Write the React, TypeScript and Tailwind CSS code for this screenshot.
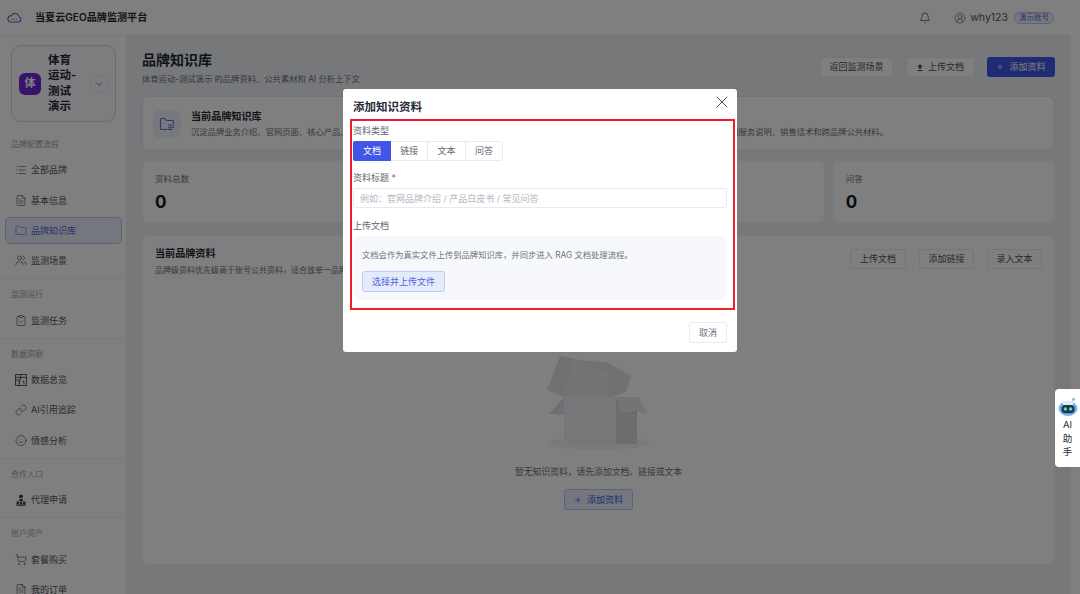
import { Bell, ChevronDown, CircleUserRound, ClipboardCheck, FileText, Folder, Link, List, Plus, ShoppingCart, Smile, Users, X } from 'lucide-react';
import type { ReactNode } from 'react';

const font = { fontFamily: 'Inter, "Noto Sans CJK SC", sans-serif' };

const CloudLogo = () => (
  <svg width="15" height="11" viewBox="0 0 15 11" fill="none" strokeWidth="1.1">
    <defs>
      <linearGradient id="cloudStroke" x1="0" y1="0" x2="1" y2="1">
        <stop offset="0" stopColor="#4a5568" />
        <stop offset="0.55" stopColor="#5a7fd0" />
        <stop offset="1" stopColor="#8a3fc8" />
      </linearGradient>
    </defs>
    <path d="M3.4 10H11.5a2.6 2.6 0 0 0 .5-5.1A4 4 0 0 0 4.4 3.7 3.2 3.2 0 0 0 3.4 10Z" stroke="url(#cloudStroke)" />
    <path d="M4.6 7.4h1.2M6.8 7.4h1.2M9 7.4h1.2" stroke="#7f93c8" strokeWidth="1.4" />
  </svg>
);

const OverviewIcon = () => (
  <svg width="12" height="12" viewBox="0 0 12 12" fill="none" stroke="currentColor" strokeWidth="0.9">
    <rect x="0.6" y="0.6" width="10.8" height="10.8" />
    <path d="M0.6 3.4h10.8M0.6 6h5M5.6 0.6V6M3 7.5h1.6v2.5H3M7.5 7.5h1.5v2.6" />
  </svg>
);

const AgentIcon = () => (
  <svg width="12" height="12" viewBox="0 0 12 12" fill="currentColor">
    <circle cx="6" cy="2.4" r="1.9" />
    <path d="M4.4 5h3.2l.5 2H3.9zM1.5 7.5h2.4v3H1.5zM4.8 7.5h2.4v3H4.8zM8.1 7.5h2.4v3H8.1zM1.5 10.8h9v.9h-9z" />
  </svg>
);

const FolderListIcon = () => (
  <svg width="16" height="16" viewBox="0 0 16 16" fill="none" stroke="#5a73e0" strokeWidth="1.1" strokeLinecap="round" strokeLinejoin="round">
    <path d="M8 13.5H2.5a1 1 0 0 1-1-1v-9a1 1 0 0 1 1-1h3.4l1.5 2h6.1a1 1 0 0 1 1 1v2" />
    <path d="M9.5 9h5M9.5 11.2h5M9.5 13.4h3.5" />
  </svg>
);

const SolidUpload = () => (
  <svg width="6" height="7" viewBox="0 0 6 7" fill="currentColor">
    <path d="M3 0 5.6 3H4v2H2V3H.4zM.4 5.9h5.2V7H.4z" />
  </svg>
);

const EmptyBox = () => (
  <svg width="104" height="96" viewBox="0 0 104 96">
    <ellipse cx="51" cy="89" rx="51" ry="7" fill="#f2f4f8" />
    <path d="M17 43 2 60l15 1z" fill="#dfe0e6" />
    <path d="M17 43h52v47H17z" fill="#eeeef2" />
    <path d="M69 43h21v47H69z" fill="#dadadf" />
    <path d="M69 43 74 60l16 0V57z" fill="#cfcfd6" />
    <path d="M69 43h23l8 17-10-3-16 3z" fill="#e8e8ec" />
    <path d="M0 36 13 2l26 5 21 1 24 14-5 16-14 5H17z" fill="#e3e3e8" />
    <path d="M17 43 26 6l36 14-2 23z" fill="#e9e9ed" />
  </svg>
);

const NavItem = ({ icon, label, active }: { icon: ReactNode; label: string; active?: boolean }) => (
  <div
    className={
      active
        ? 'ml-[5px] mr-[4px] flex h-[27px] items-center gap-[4px] rounded-[5px] border border-[#b8c4f0] bg-[#eaeefc] pl-[9px] text-[#5468d8]'
        : 'ml-[5px] mr-[4px] flex h-[27px] items-center gap-[4px] pl-[10px] text-[#374151]'
    }
  >
    <span className="flex w-3 justify-center">{icon}</span>
    <span className={active ? 'text-[9px] text-[#5468d8]' : 'text-[9px] text-[#4b5563]'}>{label}</span>
  </div>
);

const Section = ({ title, children, last }: { title: string; children: ReactNode; last?: boolean }) => (
  <div className={last ? 'pt-[9px]' : 'border-b border-[#f2f3f6] pb-[4px] pt-[9px]'}>
    <div className="mb-[6.5px] pl-[11px] text-[8px] leading-[12px] text-[#9ca3af]">{title}</div>
    <div className="flex flex-col gap-[3.3px]">{children}</div>
  </div>
);

const StatCard = ({ label }: { label: string }) => (
  <div className="h-[63px] rounded-[7px] border border-[#f1f3f7] bg-white pl-[12px] pt-[12px]">
    <div className="text-[8.5px] leading-[13px] text-[#6b7280]">{label}</div>
    <div className="mt-[5px] text-[17px] font-bold leading-[22px] text-[#111827]">0</div>
  </div>
);

const OutlineButton = ({ children, className }: { children: ReactNode; className: string }) => (
  <button className={`flex h-[20px] items-center justify-center gap-[5px] rounded-[3px] border border-[#e8eaef] bg-white text-[9px] text-[#4b5563] ${className}`}>
    {children}
  </button>
);

const TypeTab = ({ label, active }: { label: string; active?: boolean }) => (
  <div
    className={
      active
        ? 'flex h-full w-[38px] items-center justify-center rounded-l-[2px] bg-[#3f56e8] text-[9px] text-white'
        : 'flex h-full w-[37.4px] items-center justify-center border-y border-r border-[#e8eaef] text-[9px] text-[#5f6672] last:rounded-r-[2px]'
    }
  >
    {label}
  </div>
);

const RobotIcon = () => (
  <svg width="20" height="20" viewBox="0 0 20 20">
    <circle cx="15.5" cy="2.2" r="1.5" fill="#7cc4f5" />
    <path d="M13 6 15 3" stroke="#7cc4f5" strokeWidth="0.8" />
    <ellipse cx="10" cy="11.5" rx="9.4" ry="7.5" fill="#6fb6ee" />
    <ellipse cx="10" cy="6.2" rx="5.5" ry="2.8" fill="#dcefFb" />
    <rect x="3.4" y="8" width="13.2" height="8.2" rx="4" fill="#2b3340" />
    <circle cx="7.4" cy="12" r="1.7" fill="#43e0c9" />
    <circle cx="12.6" cy="12" r="1.7" fill="#43e0c9" />
  </svg>
);

export default function App() {
  return (
    <div className="relative flex h-[594px] w-[1080px] overflow-hidden bg-white" style={font}>
      <div className="w-[1071px] shrink-0 bg-[#eef0f5]">
        {/* Top bar */}
        <header className="flex h-[36px] items-center border-b border-[#eceef2] bg-white pl-[7px] pr-[17px]">
          <CloudLogo />
          <span className="ml-[13px] text-[10.1px] font-semibold text-[#1f2937]">当夏云GEO品牌监测平台</span>
          <Bell size={12} strokeWidth={1.4} className="ml-auto text-[#374151]" />
          <CircleUserRound size={12} strokeWidth={1.2} className="ml-[23px] text-[#4b5563]" />
          <span className="ml-[4px] text-[10.5px] text-[#4b5563]">why123</span>
          <span className="ml-[6px] flex h-[12px] w-[40px] items-center justify-center rounded-full border border-[#b8c4f0] bg-[#eef1fd] text-[7.5px] text-[#5468d8]">演示账号</span>
        </header>

        <div className="flex h-[558px]">
          {/* Sidebar */}
          <aside className="w-[127px] shrink-0 overflow-hidden border-r border-[#eceef2] bg-white">
            <div className="ml-[11px] mr-[10px] mt-[9px] flex h-[77px] items-center rounded-[10px] border border-[#ccd6f5] bg-[#fafbfe] pl-[7px]">
              <div className="flex h-[22px] w-[22px] shrink-0 items-center justify-center rounded-[6px] bg-[#6d28d9] text-[11px] font-bold text-white">体</div>
              <div className="ml-[7px] w-[30px] shrink-0 text-[11.5px] font-semibold leading-[15.5px] text-[#1f2937]">体育运动-测试演示</div>
              <div className="ml-[12px] flex h-[18px] w-[18px] shrink-0 items-center justify-center rounded-[6px] border border-[#e8eaef] bg-[#f7f8fb]">
                <ChevronDown size={10} className="text-[#4458c8]" />
              </div>
            </div>
            <div className="mt-[7px]">
              <Section title="品牌配置流程">
                <NavItem icon={<List size={12} strokeWidth={1.2} />} label="全部品牌" />
                <NavItem icon={<FileText size={13} strokeWidth={1.2} />} label="基本信息" />
                <NavItem active icon={<Folder size={13} strokeWidth={1.2} />} label="品牌知识库" />
                <NavItem icon={<Users size={13} strokeWidth={1.2} />} label="监测场景" />
              </Section>
              <Section title="监测运行">
                <NavItem icon={<ClipboardCheck size={13} strokeWidth={1.2} />} label="监测任务" />
              </Section>
              <Section title="数据洞察">
                <NavItem icon={<OverviewIcon />} label="数据总览" />
                <NavItem icon={<Link size={12} strokeWidth={1.2} />} label="AI引用追踪" />
                <NavItem icon={<Smile size={13} strokeWidth={1.2} />} label="情感分析" />
              </Section>
              <Section title="合作入口">
                <NavItem icon={<AgentIcon />} label="代理申请" />
              </Section>
              <Section title="账户资产" last>
                <NavItem icon={<ShoppingCart size={13} strokeWidth={1.2} />} label="套餐购买" />
                <NavItem icon={<FileText size={13} strokeWidth={1.2} />} label="我的订单" />
              </Section>
            </div>
          </aside>

          {/* Main */}
          <main className="min-w-0 flex-1 pl-[15px] pr-[16px] pt-[14px]">
            <div className="flex h-[46px] items-start justify-between">
              <div>
                <h1 className="text-[14px] font-bold leading-[20px] text-[#1f2937]">品牌知识库</h1>
                <p className="mt-[3px] text-[8.3px] leading-[13px] text-[#6b7280]">体育运动-测试演示 的品牌资料、公共素材和 AI 分析上下文</p>
              </div>
              <div className="mt-[7px] flex">
                <OutlineButton className="w-[73px]">返回监测场景</OutlineButton>
                <OutlineButton className="ml-[13px] w-[69px]">
                  <SolidUpload />
                  上传文档
                </OutlineButton>
                <button className="ml-[12px] flex h-[20px] w-[68px] items-center justify-center gap-[5px] rounded-[3px] bg-[#3f56e8] text-[9px] text-white">
                  <Plus size={8} />
                  添加资料
                </button>
              </div>
            </div>

            <div className="flex h-[55px] items-center rounded-[7px] border border-[#e3e8f8] bg-white pl-[10px]">
              <div className="flex h-[28px] w-[28px] items-center justify-center rounded-[7px] bg-[#eef1fb]">
                <FolderListIcon />
              </div>
              <div className="ml-[10px]">
                <div className="text-[10.1px] font-semibold leading-[15px] text-[#1f2937]">当前品牌知识库</div>
                <div className="mt-[2px] whitespace-nowrap text-[8.3px] leading-[13px] text-[#6b7280]">沉淀品牌业务介绍、官网页面、核心产品、服务能力、行业案例、新闻动态、常见问答与品牌背景资料；账号公共资料可放公司介绍、资质证明、通用服务说明、销售话术和跨品牌公共材料。</div>
              </div>
            </div>

            <div className="mt-[9px] grid grid-cols-4 gap-[8px]">
              <StatCard label="资料总数" />
              <StatCard label="文档" />
              <StatCard label="链接" />
              <StatCard label="问答" />
            </div>

            <section className="mt-[12px] h-[330px] rounded-[7px] border border-[#f1f3f7] bg-white">
              <div className="flex h-[46px] items-start justify-between px-[12px] pt-[10px]">
                <div>
                  <div className="text-[10.1px] font-semibold leading-[15px] text-[#1f2937]">当前品牌资料</div>
                  <div className="mt-[3px] text-[8px] leading-[13px] text-[#6b7280]">品牌级资料优先级高于账号公共资料，适合放单一品牌的专属内容。</div>
                </div>
                <div className="mt-[3px] flex gap-[13px]">
                  <OutlineButton className="w-[56px]">上传文档</OutlineButton>
                  <OutlineButton className="w-[55px]">添加链接</OutlineButton>
                  <OutlineButton className="w-[55px]">录入文本</OutlineButton>
                </div>
              </div>
              <div className="mt-[72px] flex flex-col items-center">
                <EmptyBox />
                <p className="mt-[15px] text-[8.8px] leading-[14px] text-[#6b7280]">暂无知识资料，请先添加文档、链接或文本</p>
                <button className="mt-[10px] flex h-[21px] w-[69px] items-center justify-center gap-[5px] rounded-[3px] border border-[#b8c4f0] bg-[#eaeefc] text-[9px] text-[#4458d8]">
                  <Plus size={8} />
                  添加资料
                </button>
              </div>
            </section>
          </main>
        </div>
      </div>

      {/* Dialog */}
      <div className="absolute inset-0 flex items-start justify-center bg-black/50 pt-[89px]">
        <div className="h-[263px] w-[394px] rounded-[3px] bg-white pl-[7px] pr-[2px]">
          <div className="flex h-[30px] items-start justify-between pl-[3px] pr-[3px] pt-[10px]">
            <span className="text-[11.5px] font-semibold leading-[16px] text-[#1f2937]">添加知识资料</span>
            <X size={20} strokeWidth={1.1} className="-mt-[7px] text-[#374151]" />
          </div>
          <div className="h-[191px] w-[385px] border-2 border-[#f01b2d] pl-[1px] pr-[6px] pt-[3px]">
            <div className="text-[9px] leading-[14px] text-[#5f6672]">资料类型</div>
            <div className="mt-[3px] flex h-[20px]">
              <TypeTab active label="文档" />
              <TypeTab label="链接" />
              <TypeTab label="文本" />
              <TypeTab label="问答" />
            </div>
            <div className="mt-[10px] text-[9px] leading-[14px] text-[#5f6672]">
              资料标题 <span className="text-[#ef4444]">*</span>
            </div>
            <input
              readOnly
              placeholder="例如：官网品牌介绍 / 产品白皮书 / 常见问答"
              className="mt-[3px] block h-[20px] w-full rounded-[2px] border border-[#e8eaef] px-[6px] text-[9px] outline-none placeholder:text-[#b4b8c0]"
            />
            <div className="mt-[11px] text-[9px] leading-[14px] text-[#5f6672]">上传文档</div>
            <div className="mt-[3px] h-[64px] rounded-[5px] bg-[#f7f8fc] pl-[9px] pt-[12px]">
              <p className="text-[8.3px] leading-[14px] text-[#6b7280]">文档会作为真实文件上传到品牌知识库，并同步进入 RAG 文档处理流程。</p>
              <button className="mt-[9px] flex h-[21px] w-[83px] items-center justify-center rounded-[3px] border border-[#c0ccf5] bg-[#e6ebfc] text-[9px] text-[#4f63e0]">选择并上传文件</button>
            </div>
          </div>
          <div className="flex justify-end pr-[8px] pt-[12px]">
            <button className="flex h-[21px] w-[38px] items-center justify-center rounded-[3px] border border-[#e8eaef] text-[9px] text-[#6b7280]">取消</button>
          </div>
        </div>
      </div>

      {/* Floating assistant */}
      <div className="absolute right-0 top-[389px] flex h-[78px] w-[25px] flex-col items-center rounded-l-[4px] bg-white pt-[8px] text-[9.5px] leading-[13.5px] text-[#1f2937]">
        <RobotIcon />
        <span className="mt-[1px]">AI</span>
        <span>助</span>
        <span>手</span>
      </div>
    </div>
  );
}
